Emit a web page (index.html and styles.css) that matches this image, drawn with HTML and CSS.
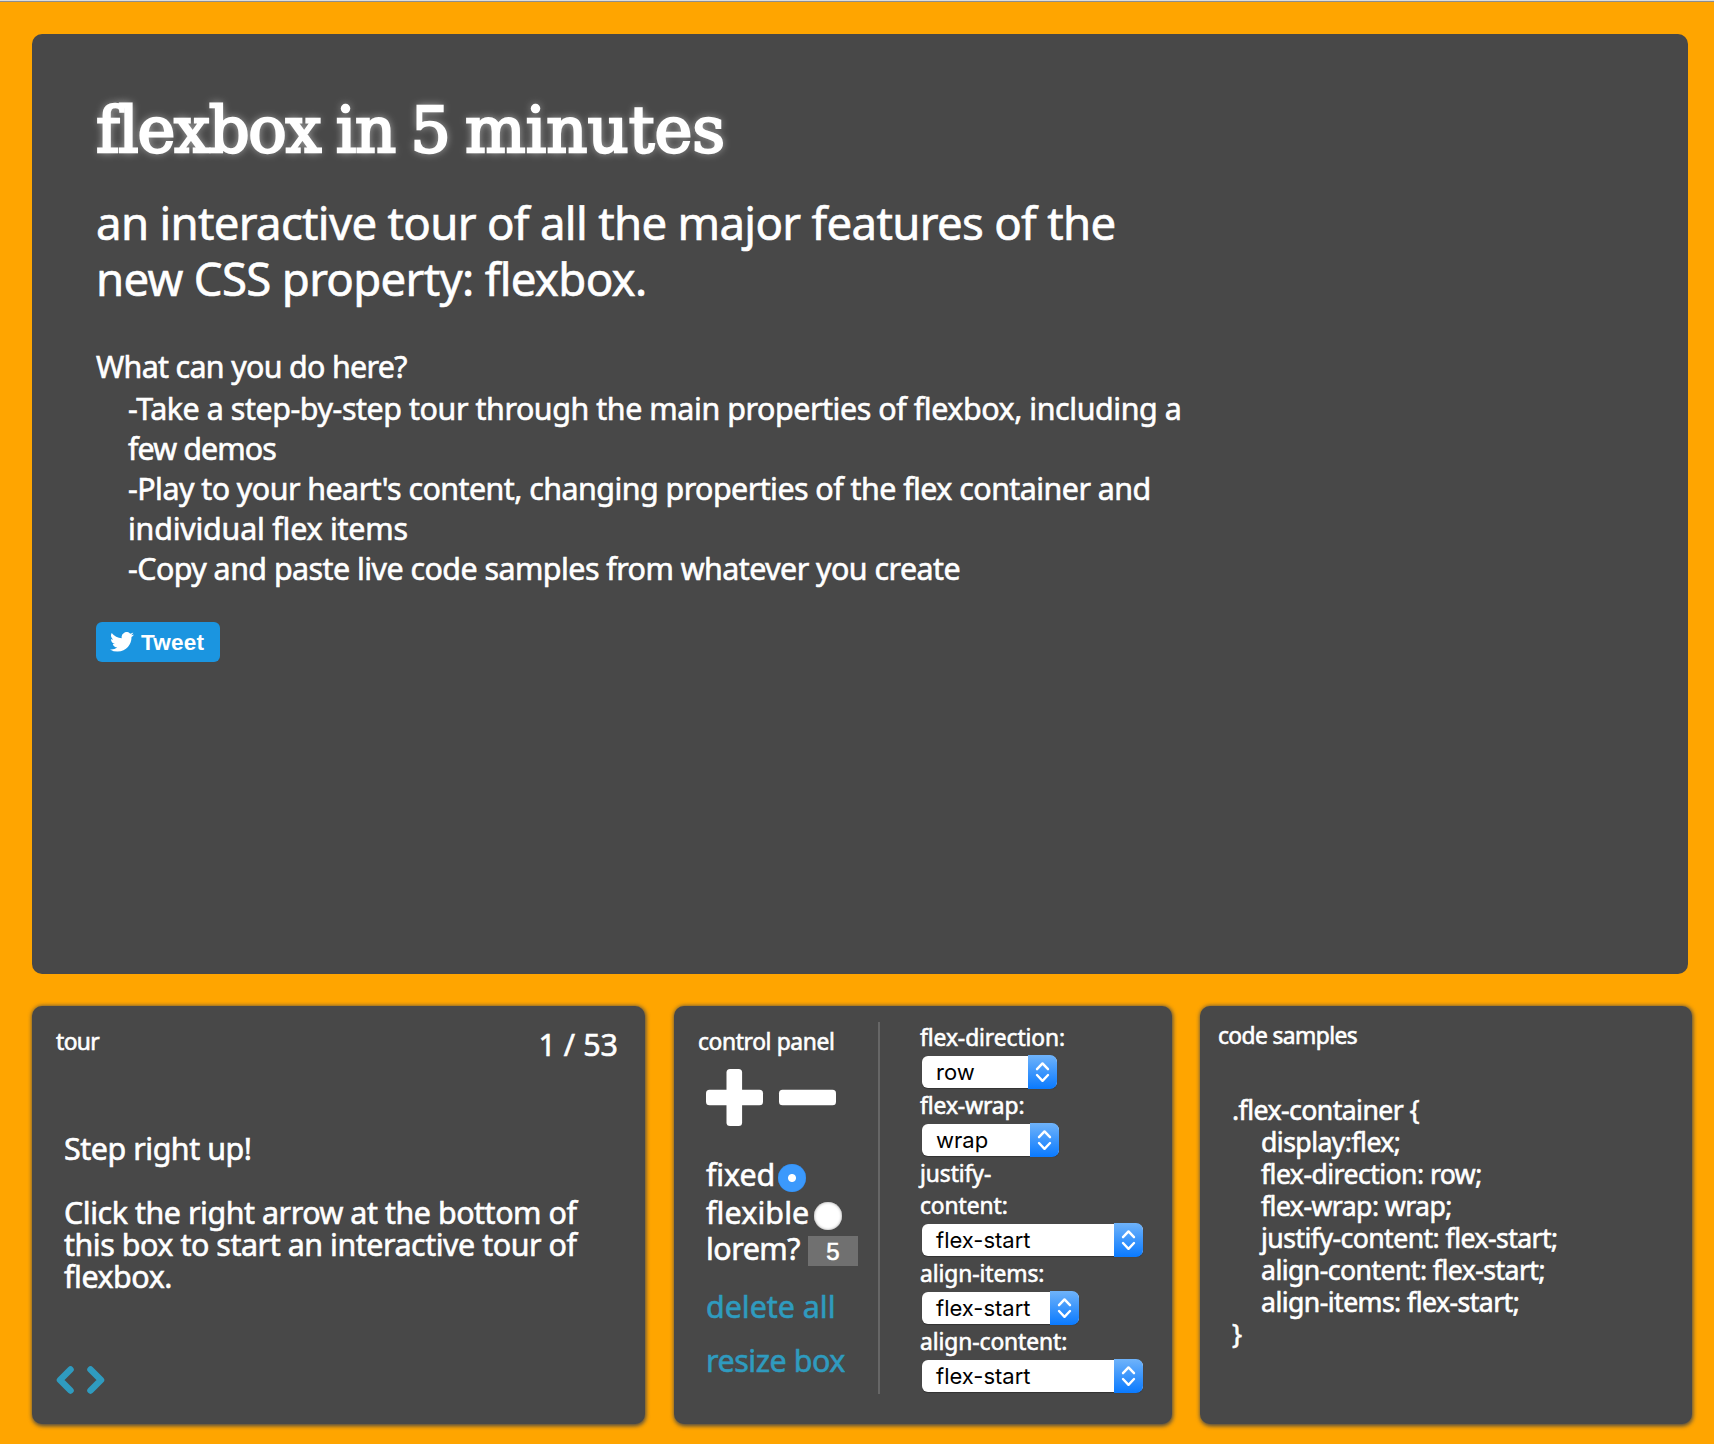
FILE: index.html
```
<!DOCTYPE html>
<html lang="en">
<head>
<meta charset="utf-8">
<title>flexbox in 5 minutes</title>
<link rel="stylesheet" href="styles.css">
</head>
<body>
<svg class="defs" width="0" height="0" aria-hidden="true">
  <symbol id="updown" viewBox="0 0 29 34"><path d="M9 14.2 14.5 8.4 20 14.2M9 20 14.5 25.8 20 20" fill="none" stroke="#fff" stroke-width="2.4" stroke-linecap="round" stroke-linejoin="round"/></symbol>
</svg>
<main class="page">
  <section class="hero">
    <h1 class="hero-title">flexbox in 5 <span class="wide">minutes</span></h1>
    <p class="hero-sub">an interactive tour of all the major features of the<br>new CSS property: flexbox.</p>
    <p class="hero-question">What can you do here?</p>
    <ul class="hero-list">
      <li class="li-take">-Take a step-by-step tour through the main properties of flexbox, including a<br><span class="close">few demos</span></li>
      <li>-Play to your heart's content, changing properties of the flex container and<br><span class="open">individual flex items</span></li>
      <li>-Copy and paste live code samples from whatever you create</li>
    </ul>
    <a class="tweet"><svg class="bird" viewBox="0 0 24 20" width="24" height="20"><path fill="#fff" d="M24 2.4a9.8 9.8 0 0 1-2.8.8A4.9 4.9 0 0 0 23.3.5a9.9 9.9 0 0 1-3.1 1.2 4.9 4.9 0 0 0-8.4 4.5A14 14 0 0 1 1.7 1 4.9 4.9 0 0 0 3.2 7.6 4.9 4.9 0 0 1 1 7v.1a4.9 4.9 0 0 0 3.9 4.8 4.9 4.9 0 0 1-2.2.1 4.9 4.9 0 0 0 4.600 3.400A9.9 9.9 0 0 1 0 17.4 14 14 0 0 0 7.5 19.6c9.1 0 14-7.5 14-14v-.6A10 10 0 0 0 24 2.4z"/></svg>Tweet</a>
  </section>
  <div class="panels">
    <section class="panel tour">
      <header class="tour-head"><h2 class="panel-title tight">tour</h2><span class="counter">1 / 53</span></header>
      <div class="tour-text">
        <p>Step right up!</p>
        <p>Click the right arrow at the bottom of<br>this box to start an interactive tour of<br>flexbox.</p>
      </div>
      <svg class="arrows" width="49" height="28" viewBox="0 0 49 28"><path d="M14.500 3.500 4 14l10.500 10.500M34.500 3.500 45 14 34.500 24.500" fill="none" stroke="#2f9bbf" stroke-width="6.500" stroke-linecap="round" stroke-linejoin="round"/></svg>
    </section>
    <section class="panel control">
      <div class="control-left">
        <h2 class="panel-title">control panel</h2>
        <svg class="plusminus" width="130" height="57" viewBox="0 0 130 57" fill="#fff"><rect y="20.7" width="57" height="15.6" rx="3.5"/><rect x="20.5" width="15.6" height="57" rx="3.5"/><rect x="73" y="20.7" width="57" height="15.6" rx="3.5"/></svg>
        <label class="row fixed">fixed<span class="radio on"></span></label>
        <label class="row">flexible<span class="radio"></span></label>
        <label class="row lorem">lorem?<span class="num">5</span></label>
        <a class="link delete">delete all</a>
        <a class="link resize">resize box</a>
      </div>
      <div class="control-right">
        <span class="prop">flex-direction:</span>
        <div class="select w-row">row<svg class="knob"><use href="#updown"/></svg></div>
        <span class="prop">flex-wrap:</span>
        <div class="select w-wrap">wrap<svg class="knob"><use href="#updown"/></svg></div>
        <span class="prop">justify-<br>content:</span>
        <div class="select w-long">flex-start<svg class="knob"><use href="#updown"/></svg></div>
        <span class="prop">align-items:</span>
        <div class="select w-items">flex-start<svg class="knob"><use href="#updown"/></svg></div>
        <span class="prop">align-content:</span>
        <div class="select w-long">flex-start<svg class="knob"><use href="#updown"/></svg></div>
      </div>
    </section>
    <section class="panel code">
      <h2 class="panel-title tight">code samples</h2>
      <div class="sample">
        <div>.flex-container {</div>
        <div class="decl">
          <div>display:flex;</div>
          <div>flex-direction: row;</div>
          <div>flex-wrap: wrap;</div>
          <div>justify-content: flex-start;</div>
          <div>align-content: flex-start;</div>
          <div>align-items: flex-start;</div>
        </div>
        <div>}</div>
      </div>
    </section>
  </div>
</main>
</body>
</html>
```
FILE: styles.css
```
* { box-sizing: border-box; }
body {
  margin: 0;
  background: #ffa500;
  color: #fff;
  font: 30.4px/32px "Noto Sans", "Open Sans", sans-serif;
  letter-spacing: -0.45px;
  white-space: nowrap;
  -webkit-text-stroke: 0.6px currentColor;
}
h1, h2, p, ul { margin: 0; padding: 0; font-weight: 400; }
ul { list-style: none; }
.defs { position: absolute; }
.page {
  height: 1444px;
  border-top: 1px solid #dcdcdc;
  box-shadow: inset 0 1px 0 #8d8d8d;
  padding: 33px 22px 0 32px;
  overflow: hidden;
}
.hero {
  width: 1656px;
  height: 940px;
  padding: 56px 64px 0;
  border-radius: 10px;
  background: #484848;
}
.hero-title {
  font: 400 64px/80px "DejaVu Serif", serif;
  letter-spacing: -1.35px;
  word-spacing: -3.5px;
  -webkit-text-stroke: 2.4px #fff;
  text-shadow: 0 0 8px rgba(255, 255, 255, 0.7);
}
.wide { letter-spacing: 0; }
.hero-sub {
  margin-top: 24px;
  font-size: 45.6px;
  line-height: 56px;
  letter-spacing: -0.7px;
}
.hero-question { margin-top: 41px; line-height: 40px; letter-spacing: -0.68px; }
.hero-list { margin: 2px 0 0 32px; line-height: 40px; letter-spacing: -0.54px; }
.li-take { letter-spacing: -0.43px; }
.close { letter-spacing: -0.9px; }
.open { letter-spacing: -0.22px; }
.tweet {
  display: flex;
  align-items: center;
  gap: 7px;
  width: 124px;
  height: 40px;
  margin-top: 33px;
  padding: 1px 0 0 14px;
  border-radius: 6px;
  background: #1b95e0;
  font: 700 22.5px/39px "Liberation Sans", Arial, sans-serif;
  letter-spacing: 0.2px;
  -webkit-text-stroke: 0;
}
.bird { margin-top: -1px; }
.panels { display: flex; margin-top: 32px; }
.panel {
  height: 418px;
  border-radius: 10px;
  background: #484848;
  box-shadow: 0.5px 1px 4px 0.5px #484848;
}
.panel-title { font-size: 22.8px; line-height: 32px; letter-spacing: -0.37px; }
.tight { letter-spacing: -0.6px; }
.tour { width: 613px; margin-right: 29px; padding: 20px 27px 0 24px; }
.tour-head { display: flex; justify-content: space-between; align-items: flex-start; }
.counter { margin-top: 3px; letter-spacing: 0.05px; }
.tour-text { display: grid; gap: 32px; margin: 72px 0 0 8px; }
.arrows { display: block; margin-top: 73px; }
.control { display: flex; width: 498px; margin-right: 28px; padding: 16px 0 0 24px; }
.control-left {
  display: flex;
  flex-direction: column;
  width: 182px;
  height: 372px;
  padding: 4px 0 0 8px;
  border-right: 2px solid #666;
}
.control-left .panel-title { margin-left: -8px; }
.plusminus { margin: 11px 0 30px; flex: none; }
.row { display: flex; align-items: center; gap: 5px; line-height: 38px; letter-spacing: 0.12px; }
.fixed { gap: 3px; letter-spacing: -0.1px; }
.radio {
  width: 28px;
  height: 28px;
  margin-top: 6px;
  border-radius: 50%;
  background: #fff;
  box-shadow: inset 0 0 3px #999;
}
.radio.on {
  background: radial-gradient(circle, #fff 3.5px, #3b99fc 4.5px);
  box-shadow: inset 0 0 1px #1f7fe8;
}
.lorem { gap: 8px; line-height: 34px; letter-spacing: -0.5px; }
.num {
  width: 50px;
  height: 30px;
  margin-top: 4px;
  background: #707070;
  font: 24px/32px "Liberation Sans", Arial, sans-serif;
  letter-spacing: 0;
  text-align: center;
}
.link { color: #2f9bbf; line-height: 40px; }
.delete { margin-top: 21px; letter-spacing: 0; }
.resize { margin-top: 14px; letter-spacing: -0.45px; }
.control-right { margin-left: 40px; }
.prop { display: block; font-size: 22.8px; line-height: 32px; letter-spacing: -0.08px; }
.select {
  display: flex;
  align-items: center;
  justify-content: space-between;
  height: 32px;
  margin: 2px 0 2px 2px;
  padding-left: 14px;
  border-radius: 6px;
  background: #fff;
  box-shadow: 0 1px 1px rgba(0, 0, 0, 0.3);
  color: #000;
  font: 22px/32px Inter, sans-serif;
  letter-spacing: 0;
  -webkit-text-stroke: 0;
}
.knob {
  flex: none;
  width: 29px;
  height: 34px;
  border-radius: 0 7px 7px 0;
  background: linear-gradient(#6fb3fa, #3c96fc 50%, #0a7aff);
}
.w-row { width: 135px; }
.w-wrap { width: 137px; }
.w-long { width: 221px; }
.w-items { width: 157px; }
.code { width: 492px; padding: 14px 0 0 18px; }
.sample { margin: 42px 0 0 14px; font-size: 26.6px; letter-spacing: -0.54px; }
.decl { margin-left: 29px; }
```
